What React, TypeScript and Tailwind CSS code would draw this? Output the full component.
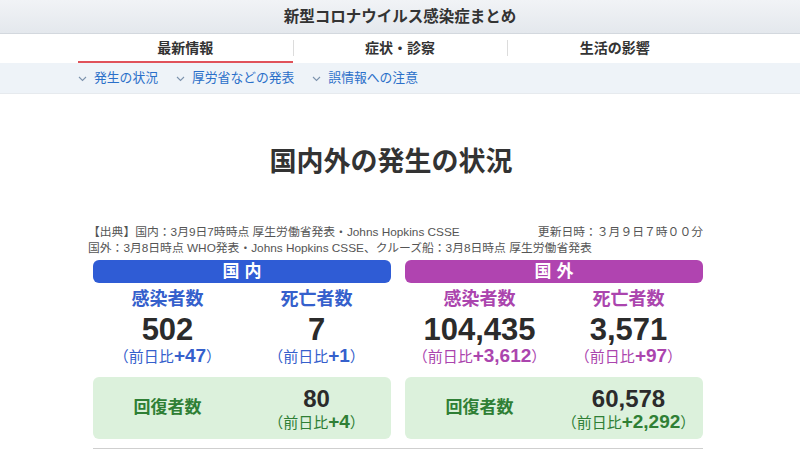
import React from "react";

const jp = "font-['Liberation_Sans','Noto_Sans_CJK_JP',sans-serif]";

type Stat = {
  label: string;
  value: string;
  delta: string;
};

const domestic: Stat[] = [
  { label: "感染者数", value: "502", delta: "+47" },
  { label: "死亡者数", value: "7", delta: "+1" },
];

const overseas: Stat[] = [
  { label: "感染者数", value: "104,435", delta: "+3,612" },
  { label: "死亡者数", value: "3,571", delta: "+97" },
];

const Chevron = () => (
  <svg width="9" height="6" viewBox="0 0 9 6" className="mr-[7px] mt-[2px]">
    <path d="M1 1l3.5 3.5L8 1" fill="none" stroke="#7d93ad" strokeWidth="1.1" />
  </svg>
);

// （前日比＋N） with the figure set larger and bold
const Delta = ({ value, color }: { value: string; color: string }) => (
  <div className={`text-[15px] leading-[18px] whitespace-nowrap ${color}`}>
    （前日比<span className="font-bold text-[19px]">{value}</span>）
  </div>
);

const Header = () => (
  <div>
    <div className="h-[34px] flex items-center justify-center bg-gradient-to-b from-[#f1f3f6] to-[#e4e8ed] border-b border-[#d3d8de] shadow-[0_1px_2px_rgba(0,0,0,0.08)]">
      <span className="text-[15.5px] font-bold text-[#333]">新型コロナウイルス感染症まとめ</span>
    </div>
    <div className="bg-white h-[29px]">
      <div className="w-[644px] mx-auto grid grid-cols-3 h-full">
        {["最新情報", "症状・診察", "生活の影響"].map((t, i) => (
          <div key={t} className="relative flex items-center justify-center">
            <span className="text-[14px] font-bold text-[#333]">{t}</span>
            {i > 0 && <div className="absolute left-0 top-[6px] h-[16px] w-px bg-[#dcdcdc]" />}
            {i === 0 && <div className="absolute left-0 right-0 bottom-0 h-[2px] bg-[#e0525a]" />}
          </div>
        ))}
      </div>
    </div>
    <div className="bg-[#eef3f8] h-[31px] border-b border-[#e6eaee]">
      <div className="w-[644px] mx-auto h-full flex items-center gap-[18px]">
        {["発生の状況", "厚労省などの発表", "誤情報への注意"].map((t) => (
          <div key={t} className="flex items-center">
            <Chevron />
            <span className="text-[12.8px] text-[#2a6fc9]">{t}</span>
          </div>
        ))}
      </div>
    </div>
  </div>
);

const StatCol = ({ s, accent }: { s: Stat; accent: string }) => (
  <div className="flex flex-col items-center">
    <div className={`text-[18px] font-bold leading-[24px] ${accent}`}>{s.label}</div>
    <div className="text-[31px] font-bold leading-[34px] text-[#2b2b2b] mt-[2px]">{s.value}</div>
    <Delta value={s.delta} color={accent} />
  </div>
);

const Panel = ({
  title,
  bar,
  accent,
  stats,
  recovered,
  recoveredDelta,
}: {
  title: string;
  bar: string;
  accent: string;
  stats: Stat[];
  recovered: string;
  recoveredDelta: string;
}) => (
  <div className="flex flex-col">
    <div className={`h-[23px] rounded-[6px] flex items-center justify-center ${bar}`}>
      <span className="text-white text-[17px] font-bold tracking-[5px] pl-[5px]">{title}</span>
    </div>
    <div className="grid grid-cols-2 mt-[4px]">
      {stats.map((s) => (
        <StatCol key={s.label} s={s} accent={accent} />
      ))}
    </div>
    <div className="grid grid-cols-2 items-center mt-[11px] h-[62px] rounded-[6px] bg-[#dcf1dc]">
      <div className="text-center text-[17px] font-bold text-[#2f7f35]">回復者数</div>
      <div className="flex flex-col items-center">
        <div className="text-[24px] font-bold leading-[27px] text-[#2b2b2b]">{recovered}</div>
        <div className="mt-[1px]">
          <Delta value={recoveredDelta} color="text-[#2f7f35]" />
        </div>
      </div>
    </div>
  </div>
);

export default function App() {
  return (
    <div className={`w-[800px] h-[450px] overflow-hidden bg-white ${jp}`}>
      <Header />
      <div className="w-[610px] ml-[93px]">
        <h1 className="text-center text-[27px] font-bold text-[#333] mt-[50px] leading-[36px] pr-[14px]">
          国内外の発生の状況
        </h1>
        <div className="mt-[44px] text-[11.8px] leading-[16px] text-[#555]">
          <div className="flex justify-between -ml-[5px]">
            <span>【出典】国内：3月9日7時時点 厚生労働省発表・Johns Hopkins CSSE</span>
            <span>更新日時：３月９日７時００分</span>
          </div>
          <div className="-ml-[5px]">国外：3月8日時点 WHO発表・Johns Hopkins CSSE、クルーズ船：3月8日時点 厚生労働省発表</div>
        </div>
        <div className="grid grid-cols-2 gap-[14px] mt-[4px]">
          <Panel
            title="国内"
            bar="bg-[#2f5cd5]"
            accent="text-[#3560cc]"
            stats={domestic}
            recovered="80"
            recoveredDelta="+4"
          />
          <Panel
            title="国外"
            bar="bg-[#b044b0]"
            accent="text-[#ab45ae]"
            stats={overseas}
            recovered="60,578"
            recoveredDelta="+2,292"
          />
        </div>
        <div className="mt-[9px] h-px bg-[#cfcfcf]" />
      </div>
    </div>
  );
}
